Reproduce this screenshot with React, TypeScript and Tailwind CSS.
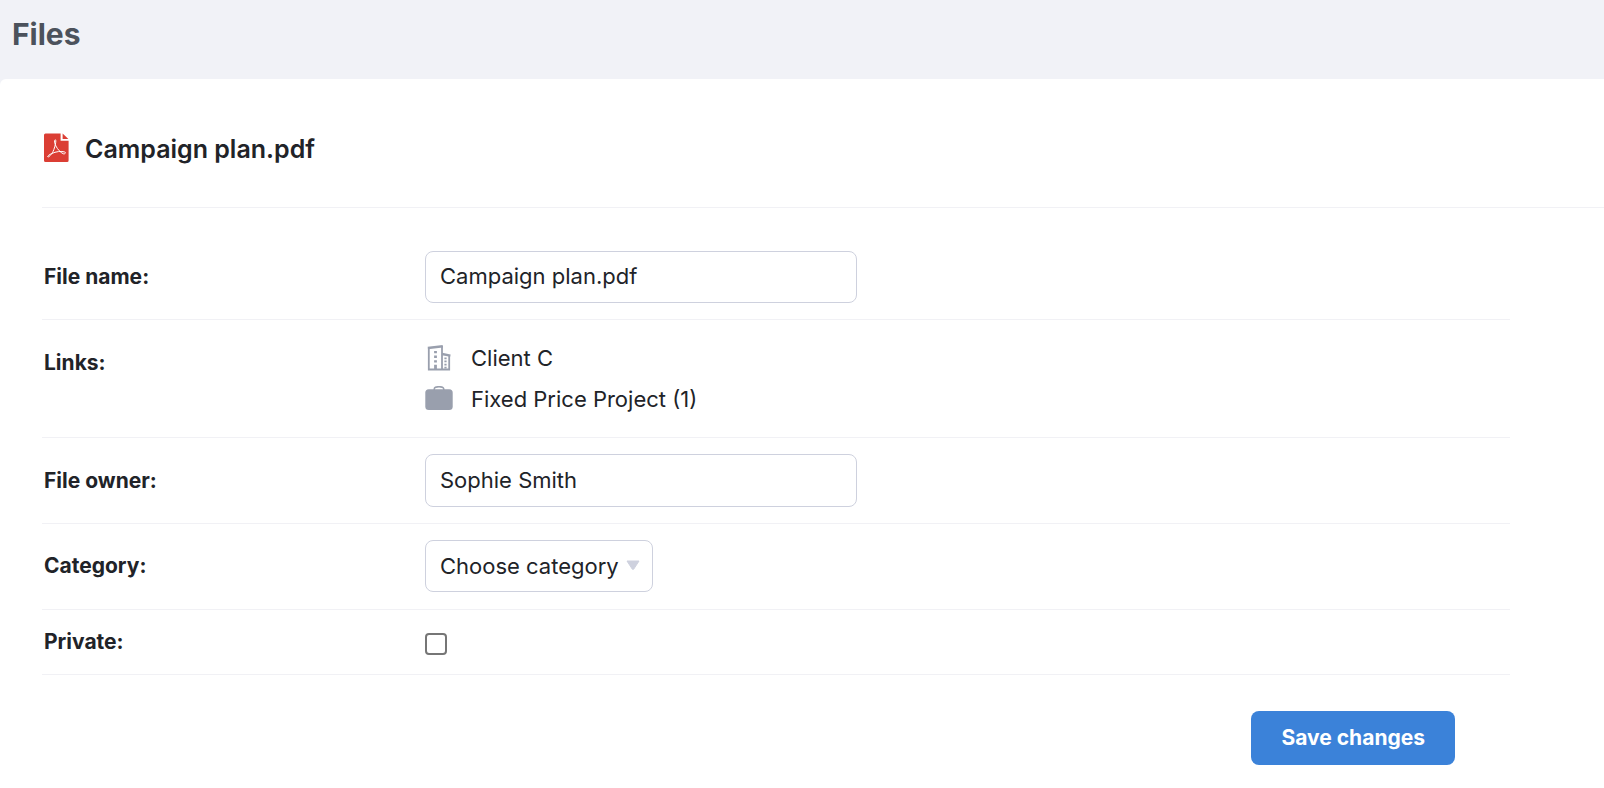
import React, { useState } from "react";

const PdfIcon = () => (
  <svg width="25" height="32" viewBox="0 0 25 32" aria-hidden="true">
    <path d="M1.5 0.400H16.600V7.800H24.600V27.500A1.500 1.500 0 0 1 23.100 29H1.500A1.500 1.500 0 0 1 0 27.500V1.900A1.500 1.500 0 0 1 1.500 0.400Z" fill="#db3e34" />
    <path d="M18.600 0.600L24.400 6H18.600Z" fill="#db3e34" />
    <path
      d="M11.300 6.800c-1.200 0-.9 3.200.6 6.200 1.700 3.400 4.600 6.500 7.400 7.800 1.700.5 3-1.200 1.400-1.800-3.200-1.200-9-.4-12.900 1.500-2.900 1.400-4.600 2.700-4 3.300.9.700 3.500-2 5.200-5.300 1.800-3.500 3.800-11.700 2.300-11.700Z"
      fill="none"
      stroke="#fff"
      strokeWidth="1"
      strokeLinejoin="round"
    />
  </svg>
);

const BuildingIcon = () => (
  <svg width="28" height="26" viewBox="0 0 28 26" fill="none" stroke="#999fad" aria-hidden="true">
    <path d="M3.800 3V24.500H24.200V10.600" strokeWidth="1.800" />
    <path d="M2.800 3L17.800 1.200" strokeWidth="2.400" />
    <path d="M17 1V24" strokeWidth="1.800" />
    <path d="M17 9L25.400 10.600" strokeWidth="2.400" />
    <path d="M10.500 6V20" strokeWidth="2.800" strokeDasharray="2.300 2.300" />
    <path d="M10.500 20V24.500" strokeWidth="2.800" />
    <path d="M20.500 12.500V24" strokeWidth="2.200" strokeDasharray="1.700 1.400" />
  </svg>
);

const BriefcaseIcon = () => (
  <svg width="28" height="26" viewBox="0 0 28 26" aria-hidden="true">
    <rect x="0.300" y="3.200" width="27.400" height="20.800" rx="3.500" fill="#999fad" />
    <path d="M9.200 4.500V3.200C9.200 1.400 10.800 0.700 14 0.700S18.800 1.400 18.800 3.200V4.500" fill="none" stroke="#999fad" strokeWidth="1.500" />
  </svg>
);

const labelClass = "w-[383px] shrink-0 pl-[2px] text-[21px] font-bold";
const fieldClass = "rounded-lg border border-[#ced1de] bg-white px-[14px]";

const App = () => {
  const [fileName, setFileName] = useState("Campaign plan.pdf");
  const [owner, setOwner] = useState("Sophie Smith");

  return (
    <div className="flex min-h-screen flex-col bg-[#f1f2f7] font-['Inter',sans-serif] text-[22px] leading-7 text-[#212328]">
      <header className="px-3 pt-[14px] pb-[25px]">
        <h1 className="text-[30px] leading-10 font-bold text-[#4c525c]">Files</h1>
      </header>

      <main className="flex-1 rounded-tl-md bg-white pl-[42px]">
        <div className="flex items-center gap-4 border-b border-[#f1f1f5] pt-[50px] pb-[38px] pl-[2px]">
          <PdfIcon />
          <h2 className="text-[25px] leading-10 font-semibold">Campaign plan.pdf</h2>
        </div>

        <form className="mr-[94px] pt-[27px]" onSubmit={(e) => e.preventDefault()}>
          <div className="flex items-center border-b border-[#f1f1f5] py-4">
            <label htmlFor="file-name" className={labelClass}>
              File name:
            </label>
            <input
              id="file-name"
              type="text"
              value={fileName}
              onChange={(e) => setFileName(e.target.value)}
              className={`${fieldClass} h-[52px] w-[432px] pb-[2px]`}
            />
          </div>

          <div className="flex items-start border-b border-[#f1f1f5] pt-6 pb-6">
            <p className={`${labelClass} pt-[5px]`}>Links:</p>
            <ul className="flex flex-col gap-[13px]">
              <li>
                <a href="#client" className="flex items-center gap-[18px]">
                  <BuildingIcon />
                  Client C
                </a>
              </li>
              <li>
                <a href="#project" className="flex items-center gap-[18px]">
                  <BriefcaseIcon />
                  Fixed Price Project (1)
                </a>
              </li>
            </ul>
          </div>

          <div className="flex items-center border-b border-[#f1f1f5] py-4">
            <label htmlFor="file-owner" className={labelClass}>
              File owner:
            </label>
            <input
              id="file-owner"
              type="text"
              value={owner}
              onChange={(e) => setOwner(e.target.value)}
              className={`${fieldClass} h-[53px] w-[432px] pb-[2px]`}
            />
          </div>

          <div className="flex items-center border-b border-[#f1f1f5] pt-4 pb-[17px]">
            <label htmlFor="category" className={labelClass}>
              Category:
            </label>
            <div className="relative">
              <select id="category" className={`${fieldClass} block h-[52px] w-[228px] appearance-none`}>
                <option>Choose category</option>
              </select>
              <svg
                width="14"
                height="10"
                viewBox="0 0 14 10"
                className="pointer-events-none absolute top-5 right-[13px]"
                aria-hidden="true"
              >
                <path d="M1 1H13L7.800 9Q7 10 6.200 9Z" fill="#ced1de" stroke="#ced1de" strokeLinejoin="round" />
              </svg>
            </div>
          </div>

          <div className="flex items-start border-b border-[#f1f1f5] pt-[18px] pb-[18px]">
            <label htmlFor="private" className={labelClass}>
              Private:
            </label>
            <input
              id="private"
              type="checkbox"
              className="mt-[5px] size-[22px] appearance-none rounded-[4px] border-2 border-[#767676] bg-white checked:bg-[#3b82d9]"
            />
          </div>

          <div className="flex justify-end pt-9 pr-[55px] pb-6">
            <button type="submit" className="h-[54px] rounded-lg bg-[#3b82d9] px-[30px] text-[21px] font-bold text-white">
              Save changes
            </button>
          </div>
        </form>
      </main>
    </div>
  );
};

export default App;
